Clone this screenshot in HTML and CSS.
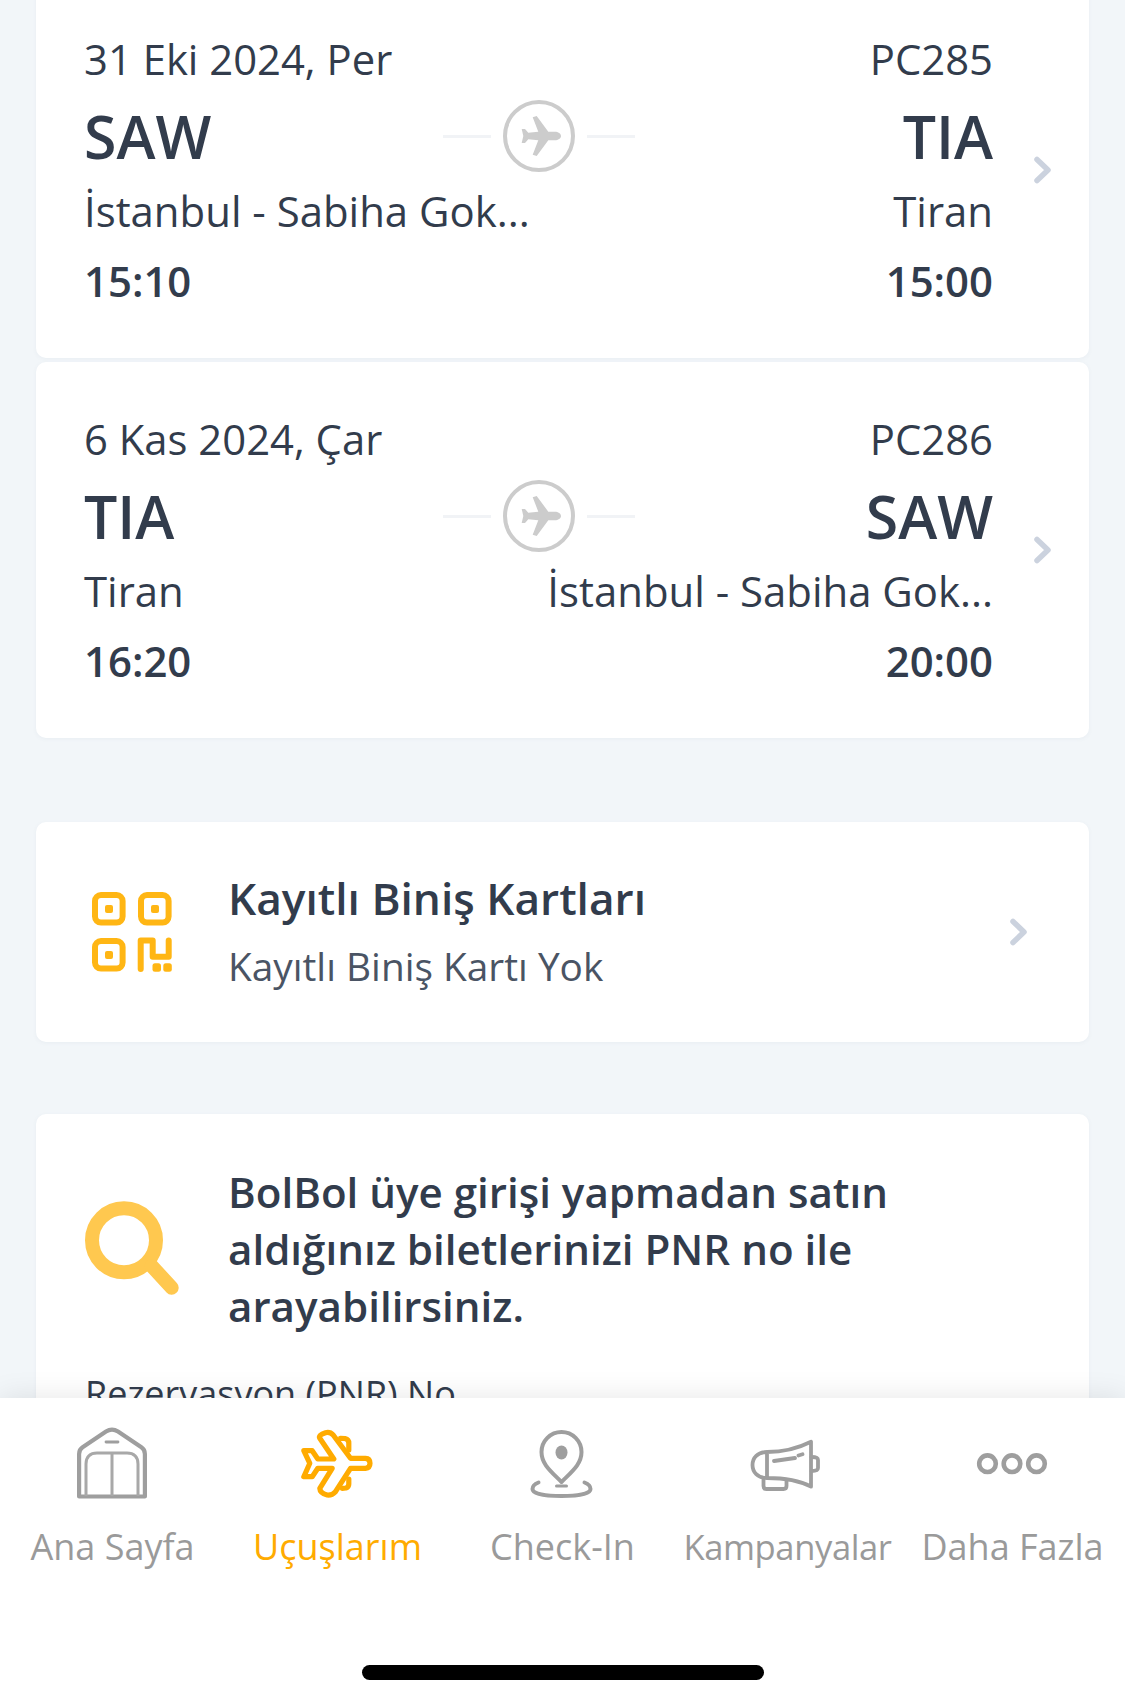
FILE: index.html
```html
<!DOCTYPE html>
<html lang="tr">
<head>
<meta charset="utf-8">
<title>Uçuşlarım</title>
<link rel="stylesheet" href="styles.css">
</head>
<body>
<div class="page">
  <main class="content">
    <section class="card flight flight-first">
      <div class="flight-body">
        <div class="row row-top"><span>31 Eki 2024, Per</span><span>PC285</span></div>
        <div class="row-code">
          <span class="code">SAW</span>
          <span class="route">
            <i class="dash"></i>
            <svg class="plane" viewBox="0 0 72 72"><circle cx="36" cy="36" r="34" fill="none" stroke="#ccc" stroke-width="4"/><path fill="#ccc" d="M58 36c0 2.500-3 4.300-6 4.300h-6.700L33.700 56l-4 -1.300L35.300 40.300l-10 -1L22 43h-3.300l1.600-7-1.600-7H22l3.300 3.700 10-1L29.700 17.300l4-1.300L45.300 31.700H52c3 0 6 1.800 6 4.300z"/></svg>
            <i class="dash"></i>
          </span>
          <span class="code code-end">TIA</span>
        </div>
        <div class="row row-city"><span class="city">İstanbul - Sabiha Gok...</span><span class="city">Tiran</span></div>
        <div class="row row-time"><span>15:10</span><span>15:00</span></div>
      </div>
      <svg class="chevron" viewBox="0 0 20 28"><path d="M4 3.500l11 10.500-11 10.500" /></svg>
    </section>

    <section class="card flight">
      <div class="flight-body">
        <div class="row row-top"><span>6 Kas 2024, Çar</span><span>PC286</span></div>
        <div class="row-code">
          <span class="code">TIA</span>
          <span class="route">
            <i class="dash"></i>
            <svg class="plane" viewBox="0 0 72 72"><circle cx="36" cy="36" r="34" fill="none" stroke="#ccc" stroke-width="4"/><path fill="#ccc" d="M58 36c0 2.500-3 4.300-6 4.300h-6.700L33.700 56l-4 -1.300L35.300 40.300l-10 -1L22 43h-3.300l1.600-7-1.600-7H22l3.300 3.700 10-1L29.700 17.300l4-1.300L45.300 31.700H52c3 0 6 1.800 6 4.300z"/></svg>
            <i class="dash"></i>
          </span>
          <span class="code code-end">SAW</span>
        </div>
        <div class="row row-city"><span class="city">Tiran</span><span class="city">İstanbul - Sabiha Gok...</span></div>
        <div class="row row-time"><span>16:20</span><span>20:00</span></div>
      </div>
      <svg class="chevron" viewBox="0 0 20 28"><path d="M4 3.500l11 10.500-11 10.500" /></svg>
    </section>

    <section class="card saved">
      <svg class="qr" viewBox="0 0 80 80">
        <g fill="none" stroke="#ffb614" stroke-width="6" stroke-linecap="round" stroke-linejoin="round">
          <rect x="3" y="3" width="27.600" height="27.600" rx="6"/>
          <rect x="49" y="3" width="27.600" height="27.600" rx="6"/>
          <rect x="3" y="49" width="27.600" height="27.600" rx="6"/>
          <path d="M48.700 77V48.500H60.700V64.700H76.700V48.500"/>
        </g>
        <g fill="#ffb614">
          <rect x="13" y="13" width="8" height="8" rx="2"/>
          <rect x="59" y="13" width="8" height="8" rx="2"/>
          <rect x="13" y="59" width="8" height="8" rx="2"/>
          <rect x="60.500" y="71.300" width="8.500" height="8.500" rx="2.500"/>
          <rect x="71.300" y="71.300" width="8.500" height="8.500" rx="2.500"/>
        </g>
      </svg>
      <div class="saved-text">
        <div class="saved-title">Kayıtlı Biniş Kartları</div>
        <div class="saved-sub">Kayıtlı Biniş Kartı Yok</div>
      </div>
      <svg class="chevron" viewBox="0 0 20 28"><path d="M4 3.500l11 10.500-11 10.500" /></svg>
    </section>

    <section class="card search">
      <div class="search-head">
        <svg class="magnifier" viewBox="0 0 100 100" fill="none" stroke="#ffc84f" stroke-width="14" stroke-linecap="round"><circle cx="44" cy="41.300" r="32"/><path d="M71.700 67l20 21.700"/></svg>
        <p class="search-text">BolBol üye girişi yapmadan satın aldığınız biletlerinizi PNR no ile arayabilirsiniz.</p>
      </div>
      <label class="pnr-label">Rezervasyon (PNR) No</label>
    </section>
  </main>

  <nav class="tabbar">
    <a class="tab">
      <svg class="tab-icon" viewBox="1 0 70 70" fill="none" stroke="#9e9e9e" stroke-linejoin="round">
        <path stroke-width="4.200" d="M2.100 68.500V26c0-3 1-5 3.500-6.700L29 3.500c4-2.500 8-2.500 12 0l23.400 15.800c2.500 1.700 3.500 3.700 3.500 6.700v42.500z"/>
        <path stroke-width="3" stroke="#a8a8a8" d="M9 68V36c0-7 4-11 11-11h30c7 0 11 4 11 11v32M35 25v43"/>
        <path stroke-width="2.800" stroke-linecap="round" d="M29 14h12"/>
      </svg>
      <span class="tab-label">Ana Sayfa</span>
    </a>
    <a class="tab tab-active">
      <svg class="tab-icon" viewBox="0 0 70 70" fill="none" stroke="#ffab00" stroke-width="5.200" stroke-linejoin="round" stroke-linecap="round">
        <path d="M62.500 30.300H47.500L30.200 7Q27 3.500 22.500 4.700 15 7 16.800 10.300L30.800 31H14.800L9.200 22.700H.8L6.800 35.300.8 48.700H9.200L14.800 40.300H29.200L16.800 60.300Q17 65 24.200 67 29 67.500 32.500 63.700L47.500 40.300H62.500Q67 40 67 35.300 67 30.500 62.500 30.300Z"/>
        <path d="M37.500 10.300L42 10.500Q45.800 11.500 45.800 15V22M39.200 60.300L43 60Q45.800 59 45.800 56V51"/>
      </svg>
      <span class="tab-label">Uçuşlarım</span>
    </a>
    <a class="tab">
      <svg class="tab-icon" viewBox="1.500 0 70 70" fill="none" stroke="#9e9e9e" stroke-width="4" stroke-linecap="round" stroke-linejoin="round">
        <path d="M35 54C24 43 15 36 15 24a20 20 0 0 1 40 0C55 36 46 43 35 54z"/>
        <ellipse cx="35" cy="24.500" rx="6" ry="7" fill="#9e9e9e" stroke="none"/>
        <path d="M12 54.500C8 56 6 59 6 61c0 5 14 7 29 7s29-2 29-7c0-2-2-5-6-6.500"/>
        <path d="M30 58h10" stroke-width="3"/>
      </svg>
      <span class="tab-label">Check-In</span>
    </a>
    <a class="tab">
      <svg class="tab-icon" viewBox="2.500 0 70 70" fill="none" stroke="#9e9e9e" stroke-width="3.800" stroke-linecap="round" stroke-linejoin="round">
        <path d="M16.500 24C32 24 48 20 60.500 13.700V58.700C48 52 32 50 16.500 50zM16.500 24C7 24 2 30 2 37s5 13 14.500 13"/>
        <path d="M13 52v6c0 2 1 3 3 3h17c2 0 3-1 3-3v-6M23.500 33l21-3M48 27.500l4-1.200M61 29c4 0 6.500 1 6.500 3v8c0 2-2.500 3-6.500 3"/>
      </svg>
      <span class="tab-label tab-label-tight">Kampanyalar</span>
    </a>
    <a class="tab">
      <svg class="tab-icon" viewBox="1 0 70 70" fill="none" stroke="#9e9e9e" stroke-width="4.600">
        <circle cx="10.500" cy="35.700" r="8.300"/>
        <circle cx="35" cy="35.700" r="8.300"/>
        <circle cx="59.500" cy="35.700" r="8.300"/>
      </svg>
      <span class="tab-label">Daha Fazla</span>
    </a>
    <span class="home-indicator"></span>
  </nav>
</div>
</body>
</html>
```
FILE: styles.css
```css
* { box-sizing: border-box; }
html, body { margin: 0; padding: 0; }
body { font-family: "Open Sans", "Noto Sans", sans-serif; color: #323c4c; background: #f2f6f9; }
.page { width: 1125px; height: 1704px; display: flex; flex-direction: column; overflow: hidden; }
.content { height: 1398px; overflow: hidden; padding: 0 36px; flex: none; }
.card { background: #fff; border-radius: 10px; display: flex; align-items: center; box-shadow: 0 1px 4px rgba(90,110,140,.06); }
.flight { height: 376px; margin-bottom: 4px; padding: 0 0 0 48px; }
.flight-first { margin-top: -18px; }
.flight-body { flex: none; width: 909px; display: flex; flex-direction: column; }
.row { display: flex; justify-content: space-between; align-items: baseline; }
.row-top { font-size: 41.800px; line-height: 56px; }
.row-code { display: grid; grid-template-columns: 1fr auto 1fr; align-items: center; height: 96px; margin-top: 1px; }
.code { font-size: 59px; font-weight: 600; line-height: 80px; }
.code-end { text-align: right; }
.route { display: flex; align-items: center; gap: 12px; }
.dash { display: block; width: 48px; height: 3px; background: #f1f3f6; }
.plane { width: 72px; height: 72px; display: block; }
.row-city { font-size: 41.900px; line-height: 56px; margin-top: -1px; }
.city { white-space: nowrap; }
.row-time { font-size: 41.900px; font-weight: 600; line-height: 56px; margin-top: 14px; }
.chevron { width: 20px; height: 28px; flex: none; margin-left: 40px; fill: none; stroke: #cbd2de; stroke-width: 5.500; stroke-linecap: round; stroke-linejoin: round; }
.saved { height: 220px; margin-top: 84px; padding: 0 60px 0 56px; }
.qr { width: 80px; height: 80px; flex: none; }
.saved-text { flex: 1; margin-left: 56px; }
.saved-title { font-size: 44.200px; font-weight: 600; line-height: 56px; margin-top: -3px; }
.saved-sub { font-size: 38.800px; line-height: 50px; margin-top: 15px; color: #4a5464; }
.saved .chevron { margin-left: 0; }
.search { display: block; margin-top: 72px; padding: 50px 44px 0; }
.search-head { display: flex; align-items: center; }
.magnifier { width: 100px; height: 100px; flex: none; margin-right: 48px; }
.search-text { margin: 0; width: 760px; font-size: 42.100px; font-weight: 600; line-height: 56.800px; }
.pnr-label { display: block; font-size: 36px; line-height: 50px; margin: 35px 0 0 5px; }
.tabbar { position: relative; z-index: 1; flex: none; height: 306px; background: #fff; display: grid; grid-template-columns: repeat(5, 225px); align-items: start; box-shadow: 0 0 28px rgba(0,0,0,.1); }
.tab { display: flex; flex-direction: column; align-items: center; padding-top: 30px; color: #9a9a9a; }
.tab-active { color: #ffab00; }
.tab-icon { width: 70px; height: 70px; display: block; overflow: visible; }
.tab-label { font-size: 36px; line-height: 48px; margin-top: 25px; white-space: nowrap; }
.tab-label-tight { font-size: 34.600px; letter-spacing: -.4px; }
.home-indicator { position: absolute; left: 362px; bottom: 24px; width: 402px; height: 15px; border-radius: 8px; background: #000; }
```
